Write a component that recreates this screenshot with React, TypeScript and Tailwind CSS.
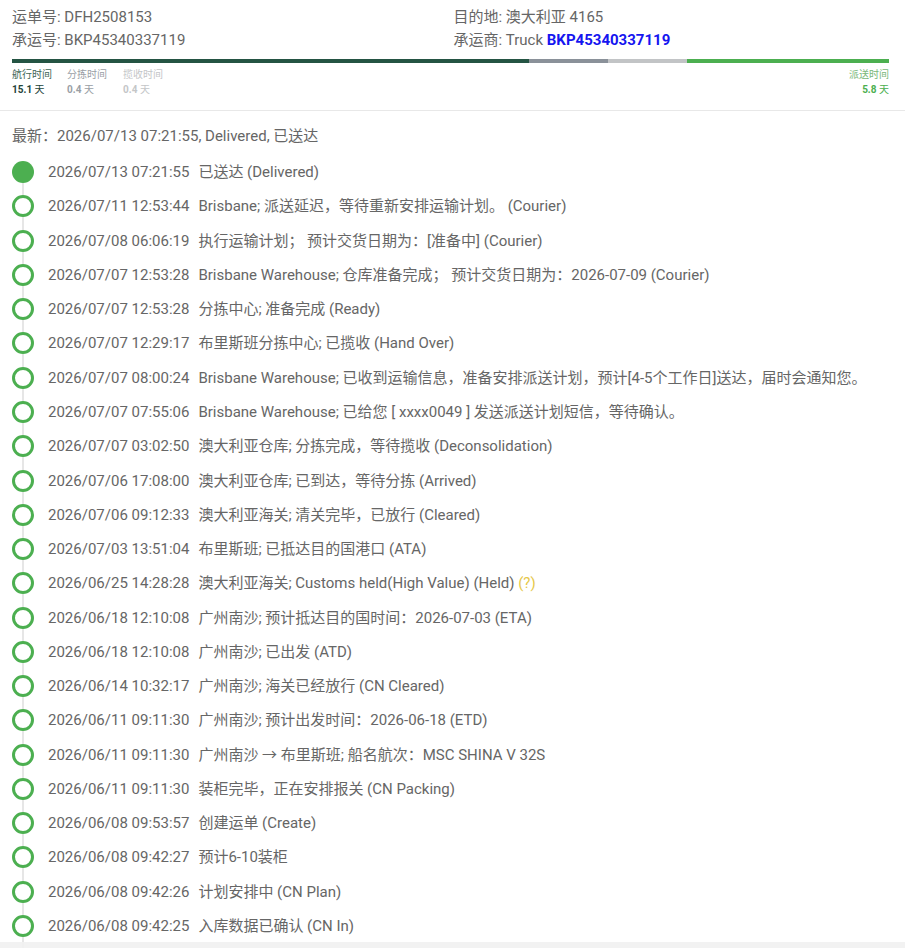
import React from "react";

type Row = { time: string; text: string; held?: boolean };

const rows: Row[] = [
  { time: "2026/07/13 07:21:55", text: "已送达 (Delivered)" },
  { time: "2026/07/11 12:53:44", text: "Brisbane; 派送延迟，等待重新安排运输计划。 (Courier)" },
  { time: "2026/07/08 06:06:19", text: "执行运输计划； 预计交货日期为：[准备中] (Courier)" },
  { time: "2026/07/07 12:53:28", text: "Brisbane Warehouse; 仓库准备完成； 预计交货日期为：2026-07-09 (Courier)" },
  { time: "2026/07/07 12:53:28", text: "分拣中心; 准备完成 (Ready)" },
  { time: "2026/07/07 12:29:17", text: "布里斯班分拣中心; 已揽收 (Hand Over)" },
  { time: "2026/07/07 08:00:24", text: "Brisbane Warehouse; 已收到运输信息，准备安排派送计划，预计[4-5个工作日]送达，届时会通知您。" },
  { time: "2026/07/07 07:55:06", text: "Brisbane Warehouse; 已给您 [ xxxx0049 ] 发送派送计划短信，等待确认。" },
  { time: "2026/07/07 03:02:50", text: "澳大利亚仓库; 分拣完成，等待揽收 (Deconsolidation)" },
  { time: "2026/07/06 17:08:00", text: "澳大利亚仓库; 已到达，等待分拣 (Arrived)" },
  { time: "2026/07/06 09:12:33", text: "澳大利亚海关; 清关完毕，已放行 (Cleared)" },
  { time: "2026/07/03 13:51:04", text: "布里斯班; 已抵达目的国港口 (ATA)" },
  { time: "2026/06/25 14:28:28", text: "澳大利亚海关; Customs held(High Value) (Held)", held: true },
  { time: "2026/06/18 12:10:08", text: "广州南沙; 预计抵达目的国时间：2026-07-03 (ETA)" },
  { time: "2026/06/18 12:10:08", text: "广州南沙; 已出发 (ATD)" },
  { time: "2026/06/14 10:32:17", text: "广州南沙; 海关已经放行 (CN Cleared)" },
  { time: "2026/06/11 09:11:30", text: "广州南沙; 预计出发时间：2026-06-18 (ETD)" },
  { time: "2026/06/11 09:11:30", text: "广州南沙 → 布里斯班; 船名航次：MSC SHINA V 32S" },
  { time: "2026/06/11 09:11:30", text: "装柜完毕，正在安排报关 (CN Packing)" },
  { time: "2026/06/08 09:53:57", text: "创建运单 (Create)" },
  { time: "2026/06/08 09:42:27", text: "预计6-10装柜" },
  { time: "2026/06/08 09:42:26", text: "计划安排中 (CN Plan)" },
  { time: "2026/06/08 09:42:25", text: "入库数据已确认 (CN In)" },
];

const App: React.FC = () => {
  return (
    <div className="min-h-screen overflow-hidden bg-white font-['Roboto','Noto_Sans_CJK_SC',sans-serif] text-[#666]">
      {/* header */}
      <div className="border-b border-[#e8e8e8] px-3 pt-[6px] pb-[13px]">
        <div className="grid grid-cols-2 text-[15px] leading-[23px]">
          <div>运单号: DFH2508153</div>
          <div className="pl-[1px]">目的地: 澳大利亚 4165</div>
          <div>承运号: BKP45340337119</div>
          <div className="pl-[1px]">
            承运商: Truck <span className="font-bold text-[#1515f0]">BKP45340337119</span>
          </div>
        </div>
        <div className="mt-[7px] flex h-[4px] w-[877px]">
          <div className="w-[517px] bg-[#245443]" />
          <div className="w-[79px] bg-[#8a9199]" />
          <div className="w-[79px] bg-[#c2c4c6]" />
          <div className="flex-1 bg-[#4caf50]" />
        </div>
        <div className="mt-[4px] flex w-[877px] text-[10px] leading-[15px]">
          <div className="w-[55px]">
            <div className="text-[#3d6656]">航行时间</div>
            <div className="font-bold text-[#24443a]">15.1 <span className="font-normal">天</span></div>
          </div>
          <div className="w-[56px] text-[#9aa0a6]">
            <div>分拣时间</div>
            <div className="font-bold">0.4 <span className="font-normal">天</span></div>
          </div>
          <div className="text-[#c4c6c8]">
            <div>揽收时间</div>
            <div className="font-bold">0.4 <span className="font-normal">天</span></div>
          </div>
          <div className="ml-auto text-right text-[#79b87a]">
            <div>派送时间</div>
            <div className="font-bold text-[#4caf50]">5.8 <span className="font-normal">天</span></div>
          </div>
        </div>
      </div>

      {/* timeline */}
      <div className="px-3 pt-[14px]">
        <div className="text-[15px] leading-[22px]">最新：2026/07/13 07:21:55, Delivered, 已送达</div>
        <div className="mt-[8px]">
          {rows.map((r, i) => (
            <div key={i} className="flex h-[34.27px] items-center">
              <div className="flex h-full w-[22px] flex-col items-center">
                <div className={`w-[2px] flex-1 ${i === 0 ? "" : "bg-[#e6e6e6]"}`} />
                {i === 0 ? (
                  <div className="h-[22px] w-[22px] rounded-full bg-[#4caf50]" />
                ) : (
                  <div className="h-[22px] w-[22px] rounded-full border-[3px] border-[#4caf50]" />
                )}
                <div className="w-[2px] flex-1 bg-[#e6e6e6]" />
              </div>
              <div className="ml-[14px] flex gap-[9px] whitespace-nowrap text-[15px] leading-[22px]">
                <span>{r.time}</span>
                <span>
                  {r.text}
                  {r.held && <span className="text-[#e6c84a]"> (?)</span>}
                </span>
              </div>
            </div>
          ))}
          <div className="flex h-[20px] w-[22px] justify-center">
            <div className="w-[2px] bg-[#e6e6e6]" />
          </div>
        </div>
      </div>

      <div className="fixed inset-x-0 bottom-0 h-[6px] bg-[#f1f1f1]/90" />
    </div>
  );
};

export default App;
